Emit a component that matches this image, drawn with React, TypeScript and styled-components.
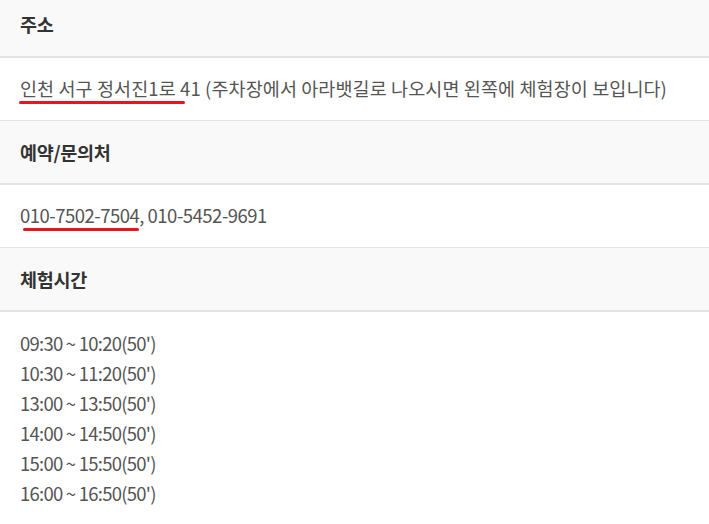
import styled, { createGlobalStyle } from "styled-components";

const GlobalStyle = createGlobalStyle`
  html, body {
    margin: 0;
    padding: 0;
    background: #ffffff;
  }
  body {
    font-family: "Noto Sans CJK KR", "Noto Sans", sans-serif;
  }
`;

const times = [
  "09:30 ~ 10:20(50')",
  "10:30 ~ 11:20(50')",
  "13:00 ~ 13:50(50')",
  "14:00 ~ 14:50(50')",
  "15:00 ~ 15:50(50')",
  "16:00 ~ 16:50(50')",
];

const App = () => {
  return (
    <>
      <GlobalStyle />
      <InfoTable>
        <HeadRow $first>주소</HeadRow>
        <BodyRow>
          <Marked $width={166} $left={-1}>
            인천 서구 정서진1로 41
          </Marked>{" "}
          (주차장에서 아라뱃길로 나오시면 왼쪽에 체험장이 보입니다)
        </BodyRow>
        <HeadRow>예약/문의처</HeadRow>
        <BodyRow $tight>
          <Marked $width={116} $left={3}>
            010-7502-7504
          </Marked>
          , 010-5452-9691
        </BodyRow>
        <HeadRow>체험시간</HeadRow>
        <TimeList>
          {times.map((t) => (
            <li key={t}>{t}</li>
          ))}
        </TimeList>
      </InfoTable>
    </>
  );
};

const InfoTable = styled.div`
  width: 709px;
  color: #555;
`;

const HeadRow = styled.div<{ $first?: boolean }>`
  height: ${(p) => (p.$first ? "48px" : "62px")};
  padding: ${(p) => (p.$first ? "0 20px 8px" : "0 20px")};
  display: flex;
  align-items: center;
  background: #f9f9f9;
  border-bottom: 2px solid #e3e3e3;
  font-size: 18.5px;
  font-weight: 700;
  color: #333;
  letter-spacing: -0.3px;
`;

const BodyRow = styled.div<{ $tight?: boolean }>`
  height: 60px;
  line-height: 60px;
  padding: 0 20px 2px;
  border-bottom: 1px solid #e3e3e3;
  font-size: 18.5px;
  color: #555;
  white-space: nowrap;
  letter-spacing: ${(p) => (p.$tight ? "-0.5px" : "0.1px")};
`;

const Marked = styled.span<{ $width: number; $left: number }>`
  position: relative;
  display: inline-block;
  line-height: 26px;
  &::after {
    content: "";
    position: absolute;
    left: ${(p) => p.$left}px;
    width: ${(p) => p.$width}px;
    bottom: -3px;
    height: 3px;
    border-radius: 2px;
    background: #e8141e;
  }
`;

const TimeList = styled.ul`
  list-style: none;
  margin: 0;
  padding: 16px 20px 0;
  font-size: 18.5px;
  line-height: 30px;
  letter-spacing: -0.75px;
  color: #555;
`;

export default App;
